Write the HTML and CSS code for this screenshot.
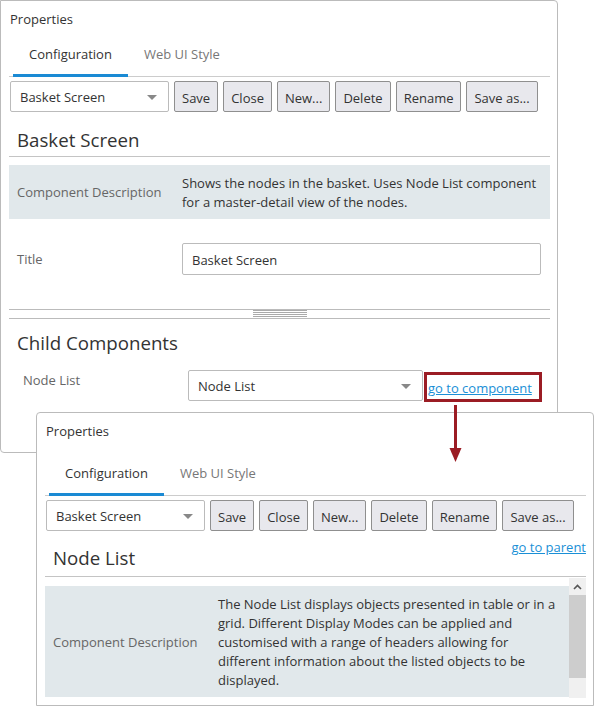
FILE: index.html
```html
<!DOCTYPE html>
<html lang="en">
<head>
  <meta charset="UTF-8" />
  <title>Properties - Basket Screen</title>
  <link rel="stylesheet" href="styles.css">
</head>
<body>

<!-- Parent component -->
<div class="panel panel-main">
  <div class="panel-title">Properties</div>
  <div class="tabs">
    <span class="tab active">Configuration</span>
    <span class="tab">Web UI Style</span>
  </div>
  <div class="toolbar">
    <div class="select select-config">Basket Screen<span class="caret"></span></div>
    <button>Save</button>
    <button>Close</button>
    <button>New...</button>
    <button>Delete</button>
    <button>Rename</button>
    <button>Save as...</button>
  </div>
  <div class="section-head">
    <h2>Basket Screen</h2>
  </div>
  <div class="desc-row">
    <div class="label">Component Description</div>
    <div class="value">Shows the nodes in the basket. Uses Node List component for a master-detail view of the nodes.</div>
  </div>
  <div class="field-row">
    <div class="label">Title</div>
    <div class="input">Basket Screen</div>
  </div>
  <div class="splitter"><span class="grip"></span></div>
  <h2 class="child-head">Child Components</h2>
  <div class="child-row">
    <div class="child-label">Node List</div>
    <div class="select select-child">Node List<span class="caret"></span></div>
    <span class="callout"><a href="#" class="link">go to component</a></span>
  </div>
</div>

<!-- arrow from the callout to the child panel -->
<svg class="pointer" width="16" height="60" viewBox="0 0 16 60">
  <rect x="6" y="0" width="3" height="46" fill="#9b1c24"/>
  <polygon points="1.5,43 13.5,43 7.5,57" fill="#9b1c24"/>
</svg>

<!-- Child component -->
<div class="panel panel-child">
  <div class="panel-title">Properties</div>
  <div class="tabs">
    <span class="tab active">Configuration</span>
    <span class="tab">Web UI Style</span>
  </div>
  <div class="toolbar">
    <div class="select select-config">Basket Screen<span class="caret"></span></div>
    <button>Save</button>
    <button>Close</button>
    <button>New...</button>
    <button>Delete</button>
    <button>Rename</button>
    <button>Save as...</button>
  </div>
  <div class="section-head">
    <h2>Node List</h2>
    <a href="#" class="link parent-link">go to parent</a>
  </div>
  <div class="scroll-area">
    <div class="scroll-content">
      <div class="desc-row">
        <div class="label">Component Description</div>
        <div class="value">The Node List displays objects presented in table or in a grid. Different Display Modes can be applied and customised with a range of headers allowing for different information about the listed objects to be displayed.</div>
      </div>
    </div>
    <div class="scrollbar">
      <div class="sb-btn">
        <svg width="9" height="6" viewBox="0 0 9 6"><polyline points="1,5 4.5,1.5 8,5" fill="none" stroke="#555" stroke-width="1.6"/></svg>
      </div>
      <div class="sb-thumb"></div>
      <div class="sb-track"></div>
    </div>
  </div>
</div>

</body>
</html>
```

FILE: styles.css
```css
* {
  box-sizing: border-box;
}
body {
  margin: 0;
  width: 594px;
  height: 706px;
  position: relative;
  background: #fff;
  font-family: "Open Sans", "Noto Sans", sans-serif;
  font-size: 13px;
  color: #333;
  overflow: hidden;
}

/* windows */
.panel {
  position: absolute;
  width: 558px;
  background: #fff;
  border: 1px solid #bbb;
  border-radius: 0 4px 4px 4px;
  padding: 0 7px 0 8px;
}
.panel-main {
  left: 0;
  top: 0;
  height: 453px;
}
.panel-child {
  left: 36px;
  top: 412px;
  height: 294px;
  border-radius: 4px 4px 0 0;
}

.panel-title {
  height: 37px;
  line-height: 37px;
  padding-left: 1px;
}

/* tabs */
.tabs {
  display: flex;
  height: 39px;
  padding-left: 4px;
  border-bottom: 1px solid #ccc;
}
.panel-child .tabs {
  margin-top: 7px;
}
.tab {
  padding: 0 16px 4px;
  line-height: 32px;
  color: #777;
}
.tab.active {
  color: #333;
  border-bottom: 3px solid #1a8ad4;
  margin-bottom: -1px;
}

/* toolbar */
.toolbar {
  display: flex;
  gap: 5px;
  margin-top: 4px;
  padding-left: 1px;
}
.select {
  position: relative;
  height: 31px;
  line-height: 31px;
  border: 1px solid #bbb;
  border-radius: 2px;
  padding-left: 9px;
  background: #fff;
}
.select-config {
  width: 159px;
}
.caret {
  position: absolute;
  right: 11px;
  top: 13px;
  width: 0;
  height: 0;
  border-left: 5px solid transparent;
  border-right: 5px solid transparent;
  border-top: 5px solid #888;
}
button {
  height: 31px;
  padding: 2px 7px 0;
  font-family: inherit;
  font-size: 13px;
  color: #333;
  background: #e8e8ed;
  border: 1px solid #8f8f8f;
  border-radius: 2px;
}

/* headings */
.section-head {
  display: flex;
  justify-content: space-between;
  align-items: flex-start;
  border-bottom: 1px solid #c4c4c4;
}
h2 {
  margin: 0;
  font-size: 18.7px;
  font-weight: normal;
  line-height: 34px;
  padding: 11px 8px 0;
  height: 44px;
}
.panel-child h2 {
  padding-top: 10px;
  height: 45px;
}
.parent-link {
  margin-top: 7px;
  line-height: 19px;
}

/* description / fields */
.desc-row {
  display: flex;
  align-items: center;
  margin-top: 8px;
  background: #e1e8eb;
}
.label {
  width: 173px;
  flex-shrink: 0;
  padding-left: 8px;
  color: #666;
}
.value {
  flex: 1;
  padding: 9px 8px 7px 0;
  line-height: 19px;
}
.field-row {
  display: flex;
  align-items: center;
  margin-top: 24px;
}
.input {
  width: 359px;
  height: 32px;
  line-height: 32px;
  padding-left: 9px;
  border: 1px solid #bbb;
  border-radius: 2px;
}

/* splitter */
.splitter {
  display: flex;
  justify-content: center;
  height: 10px;
  margin-top: 34px;
  border-top: 1px solid #bbb;
  border-bottom: 1px solid #bbb;
}
.grip {
  width: 54px;
  height: 7px;
  background: repeating-linear-gradient(#aaa 0 1px, transparent 1px 2px);
}

/* child components */
.child-head {
  margin-top: 7px;
  padding-top: 0;
  height: auto;
}
.child-row {
  display: flex;
  align-items: flex-start;
  margin-top: 10px;
}
.child-label {
  width: 179px;
  padding: 1px 0 0 14px;
  line-height: 19px;
  color: #666;
}
.select-child {
  width: 235px;
}
.link {
  color: #1a8fd6;
  text-decoration: underline;
}
.callout {
  margin: 2px 0 0 1px;
  height: 30px;
  line-height: 26px;
  padding: 0 7px 0 1px;
  border: 3px solid #9b1c24;
}

.pointer {
  position: absolute;
  left: 448px;
  top: 405px;
  z-index: 2;
}

/* scrolled region of the child panel */
.scroll-area {
  display: flex;
  height: 120px;
  margin-top: 1px;
}
.scroll-content {
  flex: 1;
  overflow: hidden;
}
.panel-child .desc-row {
  height: 111px;
}
.scrollbar {
  width: 17px;
  display: flex;
  flex-direction: column;
  background: #f0f0f0;
}
.sb-btn {
  height: 17px;
  display: flex;
  align-items: center;
  justify-content: center;
}
.sb-thumb {
  height: 83px;
  background: #cdcdcd;
}
.sb-track {
  flex: 1;
}
```
